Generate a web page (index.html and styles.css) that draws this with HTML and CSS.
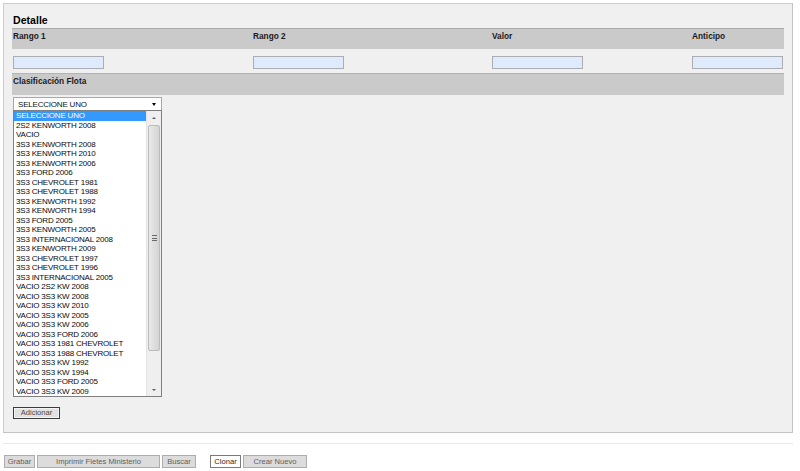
FILE: index.html
```html
<!DOCTYPE html>
<html lang="es">
<head>
<meta charset="utf-8">
<title>Detalle</title>
<link rel="stylesheet" href="styles.css">
</head>
<body>
<div class="panel">
  <h2 class="title">Detalle</h2>
  <div class="row-head cols">
    <span>Rango 1</span>
    <span>Rango 2</span>
    <span>Valor</span>
    <span>Anticipo</span>
  </div>
  <div class="row-inputs cols">
    <input type="text" class="field">
    <input type="text" class="field">
    <input type="text" class="field">
    <input type="text" class="field">
  </div>
  <div class="row-head section">
    <span>Clasificación Flota</span>
  </div>
  <div class="combo">
    <div class="select">
      <span>SELECCIONE UNO</span>
      <span class="select-arrow"></span>
    </div>
    <div class="listbox">
      <ul class="items">
        <li class="selected">SELECCIONE UNO</li>
        <li>2S2 KENWORTH 2008</li>
        <li>VACIO</li>
        <li>3S3 KENWORTH 2008</li>
        <li>3S3 KENWORTH 2010</li>
        <li>3S3 KENWORTH 2006</li>
        <li>3S3 FORD 2006</li>
        <li>3S3 CHEVROLET 1981</li>
        <li>3S3 CHEVROLET 1988</li>
        <li>3S3 KENWORTH 1992</li>
        <li>3S3 KENWORTH 1994</li>
        <li>3S3 FORD 2005</li>
        <li>3S3 KENWORTH 2005</li>
        <li>3S3 INTERNACIONAL 2008</li>
        <li>3S3 KENWORTH 2009</li>
        <li>3S3 CHEVROLET 1997</li>
        <li>3S3 CHEVROLET 1996</li>
        <li>3S3 INTERNACIONAL 2005</li>
        <li>VACIO 2S2 KW 2008</li>
        <li>VACIO 3S3 KW 2008</li>
        <li>VACIO 3S3 KW 2010</li>
        <li>VACIO 3S3 KW 2005</li>
        <li>VACIO 3S3 KW 2006</li>
        <li>VACIO 3S3 FORD 2006</li>
        <li>VACIO 3S3 1981 CHEVROLET</li>
        <li>VACIO 3S3 1988 CHEVROLET</li>
        <li>VACIO 3S3 KW 1992</li>
        <li>VACIO 3S3 KW 1994</li>
        <li>VACIO 3S3 FORD 2005</li>
        <li>VACIO 3S3 KW 2009</li>
      </ul>
      <div class="scrollbar">
        <div class="sb-btn"><span class="tri-up"></span></div>
        <div class="sb-thumb"><span class="grip"></span><span class="grip"></span><span class="grip"></span></div>
        <div class="sb-track"></div>
        <div class="sb-btn bottom"><span class="tri-down"></span></div>
      </div>
    </div>
  </div>
  <button class="btn btn-default">Adicionar</button>
</div>
<div class="separator"></div>
<div class="actions">
  <button class="btn act w31">Grabar</button>
  <button class="btn act w123">Imprimir Fletes Ministerio</button>
  <button class="btn act w34">Buscar</button>
  <button class="btn act light w31 gap">Clonar</button>
  <button class="btn act w64">Crear Nuevo</button>
</div>
</body>
</html>
```
FILE: styles.css
```css
html, body {
  margin: 0;
  padding: 0;
  background: #ffffff;
  overflow: hidden;
}

body {
  font-family: "Liberation Sans", Arial, sans-serif;
  color: #000;
}

.panel {
  box-sizing: border-box;
  margin: 3px 0 0 3px;
  width: 790px;
  height: 430px;
  padding: 8px 8px 0 8px;
  background: #f0f0f0;
  border: 1px solid #cdcdcd;
  border-right-color: #c4c4c4;
  border-bottom-color: #c4c4c4;
}

.title {
  margin: 0;
  font-size: 10.6px;
  line-height: 16px;
  height: 16px;
  font-weight: bold;
  padding-left: 1px;
}

.cols {
  display: grid;
  grid-template-columns: 240px 239px 200px 1fr;
  padding-left: 1px;
}

.row-head {
  box-sizing: border-box;
  height: 21px;
  background: #cacaca;
  border-top: 1px solid #a9a9a9;
  padding-top: 2px;
  font-size: 8.3px;
  line-height: 10px;
  font-weight: bold;
  color: #1a1a1a;
}

.section {
  height: 22px;
  padding-left: 1px;
  border-top-color: #b3b3b3;
}

.row-inputs {
  box-sizing: border-box;
  height: 24px;
  padding-top: 7px;
}

.field {
  box-sizing: border-box;
  width: 91px;
  height: 13px;
  margin: 0;
  padding: 0;
  border: 1px solid #abadb3;
  background: #dfeafc;
}

.combo {
  margin-top: 2px;
  margin-left: 1px;
  width: 149px;
}

.select {
  box-sizing: border-box;
  height: 14px;
  display: flex;
  align-items: center;
  justify-content: space-between;
  padding: 0 5px 0 4px;
  background: #ffffff;
  border: 1px solid #a8a8a8;
  font-size: 8px;
  letter-spacing: -0.2px;
  color: #111;
}

.select-arrow {
  width: 0;
  height: 0;
  border-left: 2.5px solid transparent;
  border-right: 2.5px solid transparent;
  border-top: 3px solid #000;
}

.listbox {
  box-sizing: border-box;
  margin-top: -1px;
  height: 287px;
  display: flex;
  background: #ffffff;
  border: 1px solid #7f7f7f;
}

.items {
  flex: 1;
  margin: 0;
  padding: 0;
  list-style: none;
  font-size: 8px;
  letter-spacing: -0.2px;
  line-height: 9.5px;
  color: #0a0a0a;
}

.items li {
  height: 9.5px;
  padding-left: 2px;
  white-space: nowrap;
}

.items li.selected {
  background: #3399ff;
  color: #ffffff;
}

.scrollbar {
  width: 14px;
  display: flex;
  flex-direction: column;
  background: #efefef;
  border-left: 1px solid #e4e4e4;
}

.sb-btn {
  height: 14px;
  display: flex;
  align-items: center;
  justify-content: center;
}

.sb-btn.bottom {
  height: 13px;
}

.tri-up {
  width: 0;
  height: 0;
  border-left: 2.5px solid transparent;
  border-right: 2.5px solid transparent;
  border-bottom: 2.5px solid #5f5f5f;
}

.tri-down {
  width: 0;
  height: 0;
  border-left: 2.5px solid transparent;
  border-right: 2.5px solid transparent;
  border-top: 2.5px solid #5f5f5f;
}

.sb-thumb {
  box-sizing: border-box;
  height: 226px;
  margin: 0 1px;
  border: 1px solid #bcbcbc;
  border-radius: 2px;
  background: linear-gradient(to right, #e9e9e9, #dcdcdc 60%, #d4d4d4);
  display: flex;
  flex-direction: column;
  align-items: center;
  justify-content: center;
  gap: 1.5px;
}

.grip {
  display: block;
  width: 5px;
  height: 1px;
  background: #6b6b6b;
}

.sb-track {
  flex: 1;
}

.btn {
  box-sizing: border-box;
  margin: 0;
  padding: 0;
  font-family: "Liberation Sans", Arial, sans-serif;
  font-size: 7.6px;
  line-height: 1;
  cursor: default;
}

.btn-default {
  display: block;
  margin: 10px 0 0 1px;
  width: 47px;
  height: 12px;
  background: #e1e1e1;
  border: 1px solid #3c3c3c;
  box-shadow: inset 0 0 0 1px #f4f4f4;
  color: #4a4a4a;
}

.separator {
  margin: 10px 0 0 3px;
  width: 790px;
  height: 1px;
  background: #e6e9f8;
}

.actions {
  display: flex;
  gap: 2px;
  margin: 11px 0 0 4px;
}

.act {
  height: 13px;
  background: #dcdcdc;
  border: 1px solid #adadad;
  color: #5d5d5d;
}

.act.light {
  background: #ffffff;
  border-color: #7a7a7a;
  color: #2a2a2a;
}

.gap { margin-left: 12px; }
.w31 { width: 31px; }
.w34 { width: 34px; }
.w64 { width: 64px; }
.w123 { width: 123px; }
```
